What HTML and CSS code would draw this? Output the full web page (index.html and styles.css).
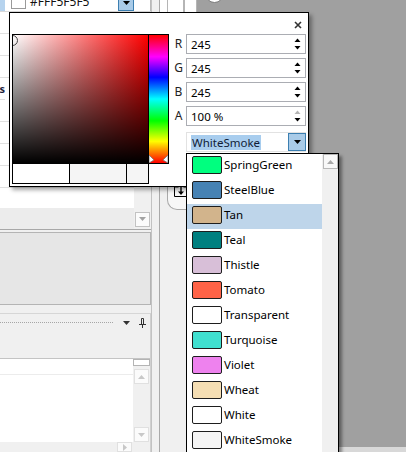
FILE: index.html
```html
<!DOCTYPE html>
<html lang="en">
<head>
    <meta charset="UTF-8">
    <meta name="viewport" content="width=device-width, initial-scale=1.0">
    <title>Color Picker</title>
    <link rel="stylesheet" href="styles.css">
</head>
<body>

    <div class="app">
        <!-- property grid + docked panel -->
        <div class="left">
            <div class="prop-top">
                <span class="drop-btn edge"></span>
                <span class="prop-swatch"></span>
                <span class="prop-hex">#FFF5F5F5</span>
                <span class="drop-btn">
                    <svg width="7" height="4" viewBox="0 0 7 4"><path d="M0 0h7L3.5 4z" fill="#000"/></svg>
                </span>
                <span class="prop-pad"></span>
            </div>

            <div class="grid">
                <div class="grid-rows">
                    <div class="row"></div>
                    <div class="row"></div>
                    <div class="row"></div>
                    <div class="row cat"><span>Brushes</span></div>
                    <div class="row"></div>
                    <div class="row"></div>
                    <div class="row"></div>
                    <div class="row"></div>
                    <div class="grid-fill"></div>
                    <div class="grid-desc"></div>
                </div>
                <div class="vscroll">
                    <span class="sbtn">
                        <svg width="7" height="4" viewBox="0 0 7 4"><path d="M0 0h7L3.5 4z" fill="#a3a3a3"/></svg>
                    </span>
                </div>
            </div>

            <div class="gray-panel"></div>

            <div class="dock">
                <div class="dock-head">
                    <span class="grip"></span>
                    <svg width="7" height="4" viewBox="0 0 7 4"><path d="M0 0h7L3.5 4z" fill="#333"/></svg>
                    <svg class="pin" width="7" height="10" viewBox="0 0 7 10">
                        <path d="M2.5 0.5h2v6h-2z" fill="none" stroke="#333"/>
                        <path d="M0 6.5h7M3.5 7v3" stroke="#333"/>
                    </svg>
                </div>
                <div class="dock-body">
                    <div class="dock-list">
                        <div class="search"></div>
                    </div>
                    <div class="vscroll dock-scroll">
                        <span class="scroll-cap"></span>
                        <span class="sbtn">
                            <svg width="7" height="4" viewBox="0 0 7 4"><path d="M0 4h7L3.5 0z" fill="#c8c8c8"/></svg>
                        </span>
                        <span class="sbtn">
                            <svg width="7" height="4" viewBox="0 0 7 4"><path d="M0 0h7L3.5 4z" fill="#c8c8c8"/></svg>
                        </span>
                    </div>
                </div>
                <div class="hscroll">
                    <span class="sbtn small">
                        <svg width="4" height="7" viewBox="0 0 4 7"><path d="M0 0v7L4 3.5z" fill="#c8c8c8"/></svg>
                    </span>
                </div>
            </div>
        </div>

        <div class="split"></div>

        <div class="mid">
            <div class="mid-top"><span></span><span></span><span></span></div>
            <div class="tab">
                <svg width="14" height="11" viewBox="0 0 14 11">
                    <path d="M0.5 1h4M9.5 1h4M0.5 1v9.5h13V1" fill="none" stroke="#000"/>
                    <path d="M7 0v7" stroke="#000" stroke-width="1.4"/>
                    <path d="M4 5.5h6L7 9z" fill="#000"/>
                </svg>
            </div>
        </div>

        <div class="canvas">
            <div class="knob"></div>
            <div class="canvas-scroll"></div>
        </div>
    </div>

    <!-- colour picker popup -->
    <div class="picker">
        <div class="picker-head">
            <svg width="8" height="8" viewBox="0 0 8 8"><path d="M1 1l6 6M7 1L1 7" stroke="#333" stroke-width="1.6"/></svg>
        </div>
        <div class="picker-body">
            <div class="picker-left">
                <div class="spectrum">
                    <div class="sv"><span class="sv-dot"></span></div>
                    <div class="hue">
                        <svg class="hue-marks" width="19" height="9" viewBox="0 0 19 9">
                            <path d="M0 1l5 5-5 3z" fill="#fff" stroke="#777" stroke-width="0.8"/>
                            <path d="M19 1l-5 5 5 3z" fill="#fff" stroke="#777" stroke-width="0.8"/>
                        </svg>
                    </div>
                </div>
                <div class="swatches">
                    <span class="sw"></span>
                    <span class="sw smoke"></span>
                    <span class="sw smoke last"></span>
                </div>
            </div>

            <div class="fields">
                <div class="field">
                    <span class="lbl">R</span>
                    <div class="spin"><span>245</span>
                        <svg width="7" height="12" viewBox="0 0 7 12"><path d="M0.5 4h6L3.5 0.5z" fill="#000"/><path d="M0.5 8h6L3.5 11.5z" fill="#000"/></svg>
                    </div>
                </div>
                <div class="field">
                    <span class="lbl">G</span>
                    <div class="spin"><span>245</span>
                        <svg width="7" height="12" viewBox="0 0 7 12"><path d="M0.5 4h6L3.5 0.5z" fill="#000"/><path d="M0.5 8h6L3.5 11.5z" fill="#000"/></svg>
                    </div>
                </div>
                <div class="field">
                    <span class="lbl">B</span>
                    <div class="spin"><span>245</span>
                        <svg width="7" height="12" viewBox="0 0 7 12"><path d="M0.5 4h6L3.5 0.5z" fill="#000"/><path d="M0.5 8h6L3.5 11.5z" fill="#000"/></svg>
                    </div>
                </div>
                <div class="field">
                    <span class="lbl">A</span>
                    <div class="spin"><span>100 %</span>
                        <svg width="7" height="12" viewBox="0 0 7 12"><path d="M0.5 4h6L3.5 0.5z" fill="#b4b4b4"/><path d="M0.5 8h6L3.5 11.5z" fill="#000"/></svg>
                    </div>
                </div>
                <div class="combo">
                    <span class="combo-text"><span class="sel">WhiteSmoke</span></span>
                    <span class="combo-btn">
                        <svg width="7" height="4" viewBox="0 0 7 4"><path d="M0 0h7L3.5 4z" fill="#000"/></svg>
                    </span>
                </div>
            </div>
        </div>
    </div>

    <!-- named colour list -->
    <div class="colorlist">
        <ul class="items">
            <li><span class="chip" style="background:#00ff7f"></span>SpringGreen</li>
            <li><span class="chip" style="background:#4682b4"></span>SteelBlue</li>
            <li class="hover"><span class="chip" style="background:#d2b48c"></span>Tan</li>
            <li><span class="chip" style="background:#008080"></span>Teal</li>
            <li><span class="chip" style="background:#d8bfd8"></span>Thistle</li>
            <li><span class="chip" style="background:#ff6347"></span>Tomato</li>
            <li><span class="chip" style="background:#ffffff"></span>Transparent</li>
            <li><span class="chip" style="background:#40e0d0"></span>Turquoise</li>
            <li><span class="chip" style="background:#ee82ee"></span>Violet</li>
            <li><span class="chip" style="background:#f5deb3"></span>Wheat</li>
            <li><span class="chip" style="background:#ffffff"></span>White</li>
            <li><span class="chip" style="background:#f5f5f5"></span>WhiteSmoke</li>
        </ul>
        <div class="list-scroll">
            <span class="sbtn">
                <svg width="7" height="4" viewBox="0 0 7 4"><path d="M0 4h7L3.5 0z" fill="#a8a8a8"/></svg>
            </span>
        </div>
    </div>

</body>
</html>
```

FILE: styles.css
```css
* { margin: 0; padding: 0; box-sizing: border-box; }

body {
    width: 406px;
    height: 452px;
    overflow: hidden;
    font-family: "Noto Sans", "DejaVu Sans", sans-serif;
    font-size: 11px;
    color: #000;
    background: #f0f0f0;
}

svg { display: block; }

.app {
    display: flex;
    height: 452px;
}

/* ---------- left column ---------- */

.left {
    width: 151px;
    display: flex;
    flex-direction: column;
    background: #f0f0f0;
}

.prop-top {
    height: 12px;
    display: flex;
    align-items: flex-start;
    background: #fff;
    border-bottom: 1px solid #d8d8d8;
    overflow: hidden;
}

.drop-btn {
    width: 16px;
    height: 11px;
    margin-left: auto;
    display: flex;
    justify-content: center;
    padding-top: 1px;
    background: #a9cbe8;
    border: 1px solid #3c7fb1;
    border-top: none;
}

.drop-btn.edge {
    width: 5px;
    margin-left: 0;
    border: none;
    background: #b6d3ee;
}

.prop-swatch {
    width: 15px;
    height: 9px;
    margin-left: 6px;
    background: #fff;
    border: 1px solid #9a9a9a;
    border-top: none;
}

.prop-hex {
    margin-left: 4px;
    margin-top: -6px;
    font-size: 12px;
    line-height: 16px;
    color: #111;
}

.prop-pad {
    width: 17px;
    height: 11px;
    border-right: 1px solid #b9b9b9;
}

.grid {
    height: 221px;
    display: flex;
    border-bottom: 1px solid #a8a8a8;
}

.grid-rows {
    flex: 1;
    display: flex;
    flex-direction: column;
    background: #fff;
}

.row {
    height: 22px;
    border-bottom: 1px solid #e0e0e0;
}

.row.cat {
    display: flex;
    justify-content: flex-end;
    align-items: center;
    width: 5px;
    overflow: hidden;
    white-space: nowrap;
    font-weight: bold;
    color: #1b2440;
}

.grid-fill { height: 20px; }

.grid-desc {
    flex: 1;
    background: #ececec;
}

.vscroll {
    width: 17px;
    display: flex;
    flex-direction: column;
    justify-content: flex-end;
    align-items: center;
    background: #f0f0f0;
    padding-bottom: 2px;
}

.sbtn {
    width: 15px;
    height: 15px;
    display: flex;
    align-items: center;
    justify-content: center;
    background: #fbfbfb;
    border: 1px solid #c2c2c2;
}

.gray-panel {
    height: 74px;
    margin-top: 2px;
    background: #e6e6e6;
    border: 1px solid #b4b4b4;
    border-left: none;
}

.dock {
    flex: 1;
    margin-top: 8px;
    display: flex;
    flex-direction: column;
    border-top: 1px solid #d6d6d6;
    border-right: 1px solid #d0d0d0;
}

.dock-head {
    height: 44px;
    display: flex;
    align-items: flex-start;
    padding-top: 4px;
}

.grip {
    width: 113px;
    height: 1px;
    margin-top: 4px;
    background: repeating-linear-gradient(to right, #a6a6a6 0 1px, transparent 1px 2px);
}

.dock-head svg { margin-left: 10px; margin-top: 3px; }
.dock-head .pin { margin-left: 9px; margin-top: 0; }

.dock-body {
    height: 84px;
    display: flex;
    border-top: 1px solid #c4c4c4;
    background: #fff;
}

.dock-list {
    flex: 1;
    padding-top: 1px;
}

.search {
    height: 15px;
    border-bottom: 1px solid #ececec;
}

.dock-scroll {
    justify-content: flex-start;
    padding: 0;
    background: #f0f0f0;
}

.scroll-cap {
    width: 17px;
    height: 7px;
    background: #fff;
    border: 1px solid #b4b4b4;
}

.dock-scroll .sbtn { margin-top: 3px; border-color: #e0e0e0; }
.dock-scroll .sbtn + .sbtn { margin-top: 43px; }

.hscroll {
    flex: 1;
    display: flex;
    justify-content: flex-end;
    padding-right: 18px;
    background: #f0f0f0;
}

.sbtn.small { height: 10px; border-color: #e0e0e0; }

/* ---------- splitter + middle strip ---------- */

.split {
    width: 9px;
    border-left: 1px solid #c2c2c2;
    border-right: 1px solid #a9a9a9;
    background: #f0f0f0;
}

.mid {
    width: 37px;
    display: flex;
    flex-direction: column;
    background: #f0f0f0;
}

.mid-top {
    height: 12px;
    display: flex;
    background: #fff;
}

.mid-top span {
    width: 8px;
    border-right: 1px solid #b5b5b5;
}

.mid-top span:nth-child(2) { width: 16px; }
.mid-top span:nth-child(3) { width: 13px; border-left: 1px solid #b5b5b5; }

.tab {
    height: 62px;
    margin: 136px 0 0 7px;
    padding: 38px 0 0 6px;
    background: #f7f7f7;
    border: 1px solid #a9a9a9;
    border-top: none;
    border-right: none;
    border-radius: 0 0 0 10px;
}

.canvas {
    flex: 1;
    display: flex;
    flex-direction: column;
    background: #a0a0a0;
}

.knob {
    width: 19px;
    height: 19px;
    margin: -16px 0 0 8px;
    background: #fff;
    border: 1px solid #7d7d7d;
    border-radius: 50%;
}

.canvas-scroll {
    height: 5px;
    margin-top: auto;
    background: #d8d8d8;
}

/* ---------- picker popup ---------- */

.picker {
    position: absolute;
    left: 9px;
    top: 12px;
    width: 300px;
    height: 175px;
    background: #fff;
    border: 1px solid #000;
    box-shadow: 3px 3px 4px rgba(0, 0, 0, 0.35);
}

.picker-head {
    height: 21px;
    display: flex;
    justify-content: flex-end;
    padding: 8px 6px 0 0;
}

.picker-body {
    display: flex;
    padding-left: 2px;
}

.spectrum {
    width: 157px;
    height: 130px;
    display: flex;
    border: 1px solid #000;
}

.sv {
    flex: 1;
    position: relative;
    overflow: hidden;
    background:
        linear-gradient(to top, #000, rgba(0, 0, 0, 0)),
        linear-gradient(to right, #fff, #f00);
}

.sv-dot {
    position: absolute;
    left: -6px;
    top: 0;
    width: 11px;
    height: 11px;
    border: 1px solid #444;
    border-radius: 50%;
}

.hue {
    width: 20px;
    display: flex;
    flex-direction: column;
    justify-content: flex-end;
    border-left: 1px solid #000;
    background: linear-gradient(to bottom, #f00 0%, #f0f 17%, #00f 33%, #0ff 50%, #0f0 67%, #ff0 83%, #f00 100%);
}

.swatches {
    width: 137px;
    height: 20px;
    display: flex;
    border: 1px solid #000;
    border-top: none;
}

.sw {
    width: 57px;
    background: #fff;
    border-right: 1px solid #000;
}

.sw.smoke { background: #f5f5f5; }
.sw.last { flex: 1; border-right: none; }

.fields {
    margin-left: 2px;
    display: flex;
    flex-direction: column;
    gap: 4px;
}

.field {
    display: flex;
    height: 20px;
}

.lbl {
    width: 15px;
    text-align: center;
    font-size: 12px;
    line-height: 20px;
    color: #222;
}

.spin {
    width: 120px;
    display: flex;
    align-items: center;
    justify-content: space-between;
    padding: 0 4px 0 4px;
    border: 1px solid #abadb3;
    font-size: 11.5px;
}

.combo {
    display: flex;
    height: 20px;
    width: 120px;
    margin: 2px 0 0 15px;
    border: 1px solid #e2e2e2;
    border-right: none;
}

.combo-text {
    flex: 1;
    padding: 2px 0 0 4px;
}

.sel {
    display: inline-block;
    background: #a8cdee;
    color: #101c36;
    font-size: 11.5px;
    line-height: 15px;
    padding: 0 1px;
}

.combo-btn {
    width: 18px;
    display: flex;
    align-items: center;
    justify-content: center;
    background: #a9cbe8;
    border: 1px solid #3c7fb1;
}

/* ---------- colour dropdown list ---------- */

.colorlist {
    position: absolute;
    left: 186px;
    top: 153px;
    width: 153px;
    height: 320px;
    display: flex;
    background: #fff;
    border: 1px solid #000;
    box-shadow: 3px 3px 3px rgba(0, 0, 0, 0.4);
}

.items {
    flex: 1;
    list-style: none;
}

.items li {
    height: 25px;
    display: flex;
    align-items: flex-start;
    padding: 2px 0 0 5px;
    font-size: 11.5px;
    line-height: 18px;
    white-space: nowrap;
}

.items li.hover { background: #bed5ea; }

.chip {
    width: 30px;
    height: 18px;
    margin-right: 2px;
    border: 1px solid #1e1e1e;
    border-radius: 2px;
}

.list-scroll {
    width: 16px;
    padding: 0 0 0 1px;
    background: #f0f0f0;
}

.list-scroll .sbtn {
    border-color: #b8b8b8;
    background: #f8f8f8;
}
```
